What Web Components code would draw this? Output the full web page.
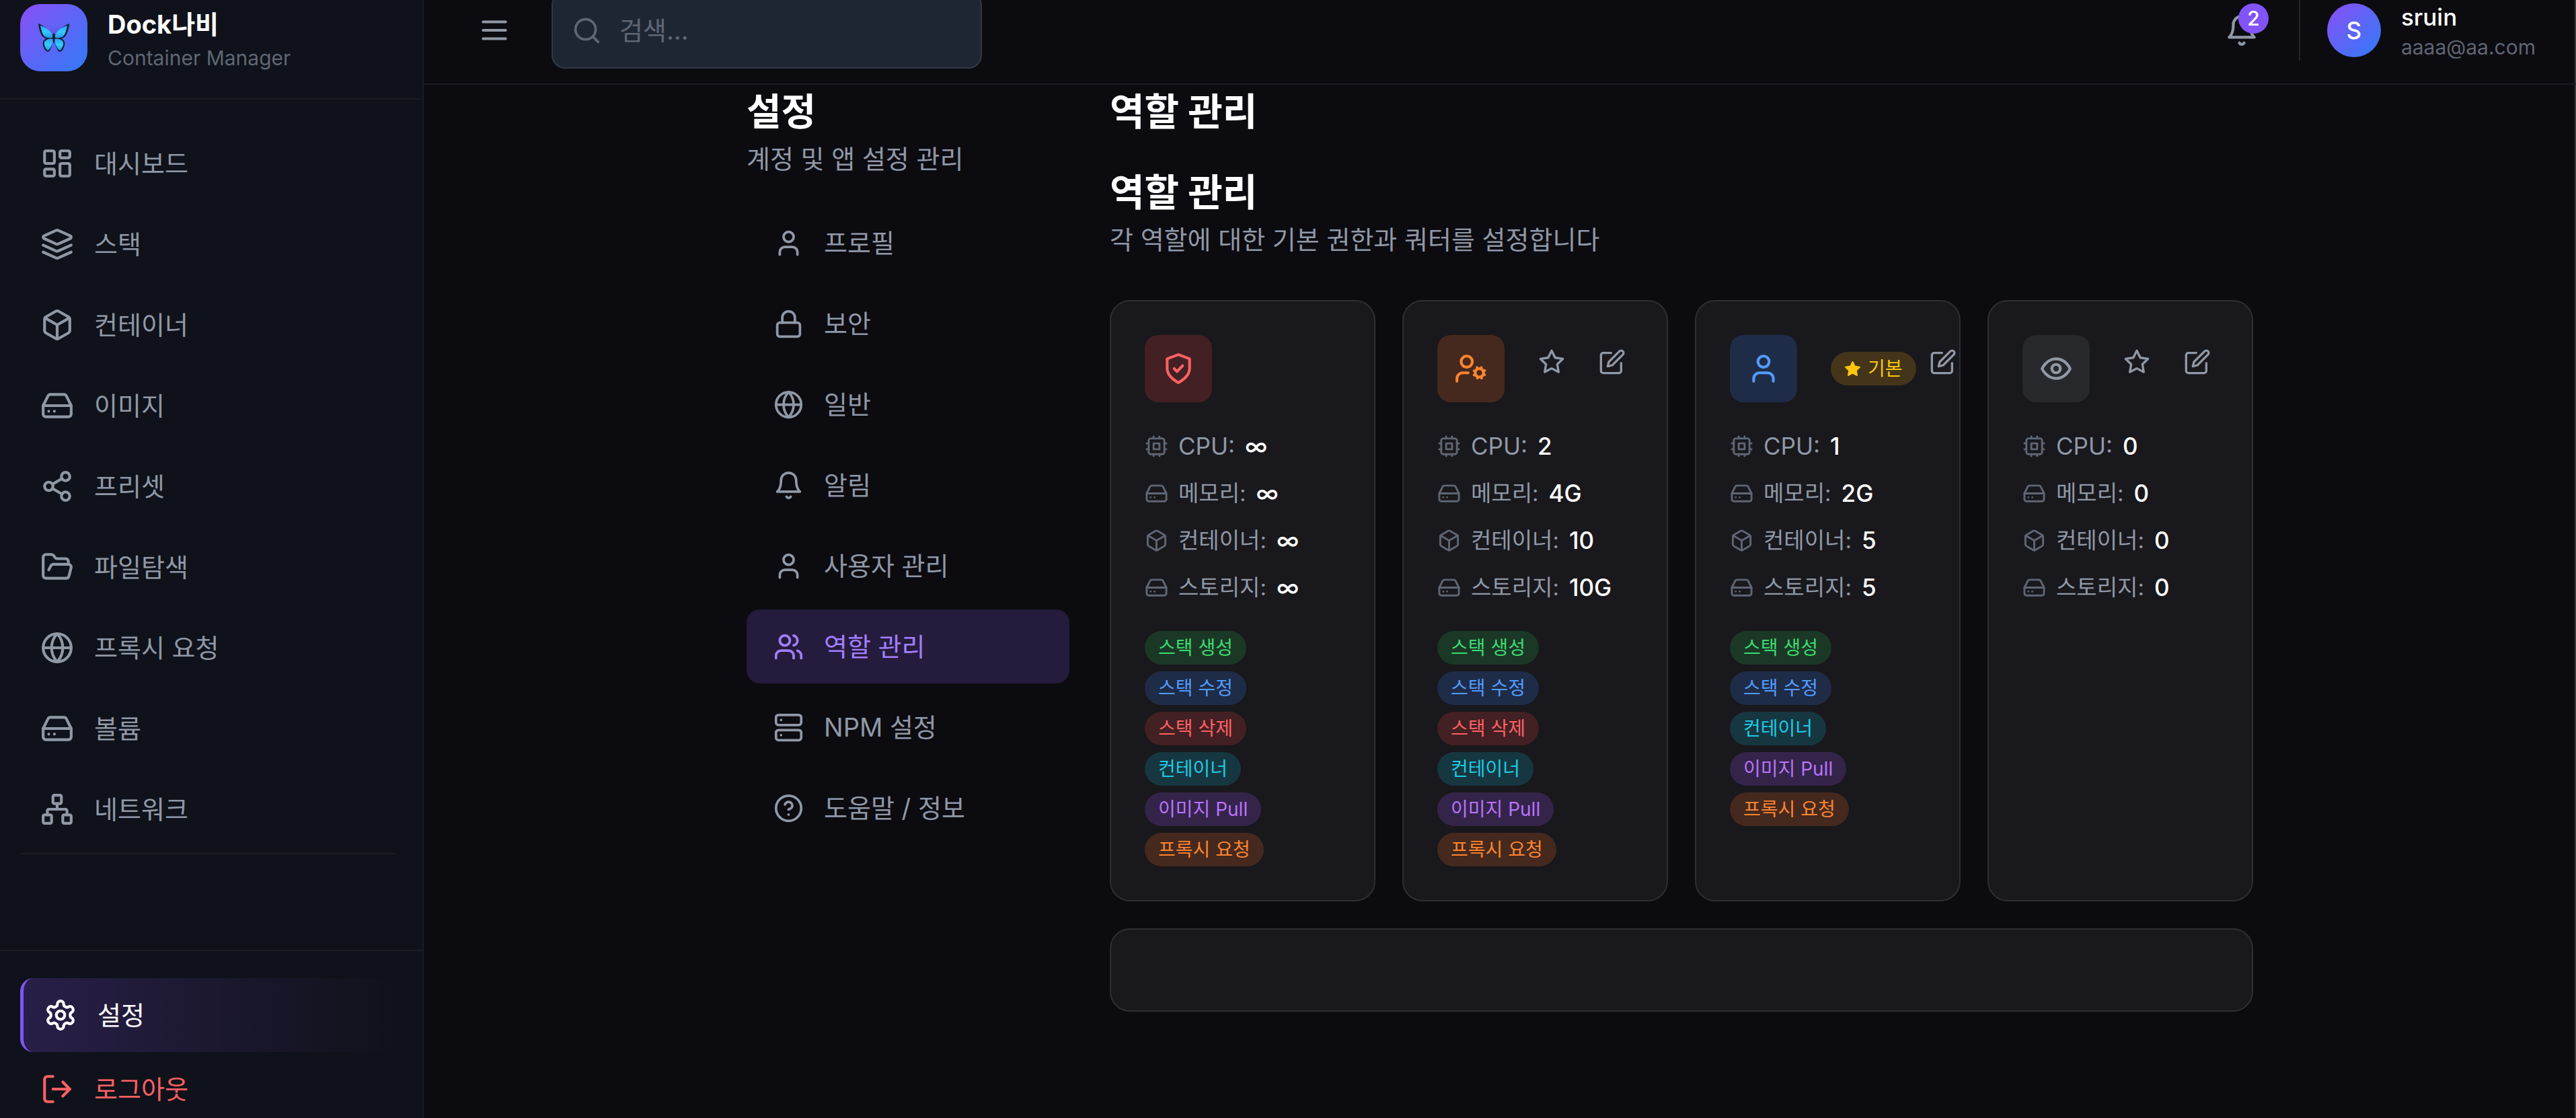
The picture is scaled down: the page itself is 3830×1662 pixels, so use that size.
<!DOCTYPE html>
<html lang="ko">
<head>
<meta charset="utf-8">
<meta name="viewport" content="width=device-width, initial-scale=1">
<title>Dock나비</title>
<style>
    :root {
        --text: #ffffff;
        --muted: #9098a6;
        --dim: #5f6673;
        --line: #1b1d23;
        --violet: #8254f7;
        --brand: linear-gradient(135deg, #8a4ff5, #2f7bf8);
        --card: #19181c;
        --card-line: #2f2f32;
    }
    html, body { height: 100%; }
    body {
        margin: 0;
        overflow: hidden;
        background: #0c0b10;
        color: var(--text);
        font: 38px/60px Inter, "Noto Sans CJK KR", sans-serif;
    }
</style>
</head>
<body>
<app-shell>
    <side-bar slot="side">
        <nav-item icon="dashboard" href="#dashboard">대시보드</nav-item>
        <nav-item icon="layers" href="#stacks">스택</nav-item>
        <nav-item icon="box" href="#containers">컨테이너</nav-item>
        <nav-item icon="drive" href="#images">이미지</nav-item>
        <nav-item icon="share" href="#presets">프리셋</nav-item>
        <nav-item icon="folder" href="#files">파일탐색</nav-item>
        <nav-item icon="globe" href="#proxy">프록시 요청</nav-item>
        <nav-item icon="drive" href="#volumes">볼륨</nav-item>
        <nav-item icon="network" href="#networks">네트워크</nav-item>
        <nav-item slot="footer" icon="settings" href="#settings" active>설정</nav-item>
        <nav-item slot="footer" icon="logout" href="#logout" danger>로그아웃</nav-item>
    </side-bar>
    <top-bar slot="top" count="2" name="sruin" email="aaaa@aa.com"></top-bar>
    <settings-layout>
        <h1 slot="title">설정</h1>
        <span slot="hint">계정 및 앱 설정 관리</span>
        <nav-item slot="menu" compact icon="user" href="#profile">프로필</nav-item>
        <nav-item slot="menu" compact icon="lock" href="#security">보안</nav-item>
        <nav-item slot="menu" compact icon="globe" href="#general">일반</nav-item>
        <nav-item slot="menu" compact icon="bell" href="#alerts">알림</nav-item>
        <nav-item slot="menu" compact icon="user" href="#users">사용자 관리</nav-item>
        <nav-item slot="menu" compact icon="users" href="#roles" active>역할 관리</nav-item>
        <nav-item slot="menu" compact icon="server" href="#npm">NPM 설정</nav-item>
        <nav-item slot="menu" compact icon="help" href="#about">도움말 / 정보</nav-item>
        <role-page></role-page>
    </settings-layout>
</app-shell>

<script>
const ICONS = {
    dashboard: '<rect x="3" y="3" width="7" height="9" rx="1"/><rect x="14" y="3" width="7" height="5" rx="1"/><rect x="14" y="12" width="7" height="9" rx="1"/><rect x="3" y="16" width="7" height="5" rx="1"/>',
    layers: '<path d="m12.83 2.18a2 2 0 0 0-1.66 0L2.6 6.08a1 1 0 0 0 0 1.83l8.58 3.91a2 2 0 0 0 1.66 0l8.58-3.9a1 1 0 0 0 0-1.83Z"/><path d="m22 17.65-9.17 4.16a2 2 0 0 1-1.66 0L2 17.65"/><path d="m22 12.65-9.17 4.16a2 2 0 0 1-1.66 0L2 12.65"/>',
    box: '<path d="M21 8a2 2 0 0 0-1-1.73l-7-4a2 2 0 0 0-2 0l-7 4A2 2 0 0 0 3 8v8a2 2 0 0 0 1 1.73l7 4a2 2 0 0 0 2 0l7-4A2 2 0 0 0 21 16Z"/><path d="m3.3 7 8.7 5 8.7-5"/><path d="M12 22V12"/>',
    drive: '<path d="M22 12H2"/><path d="M5.45 5.11 2 12v6a2 2 0 0 0 2 2h16a2 2 0 0 0 2-2v-6l-3.45-6.89A2 2 0 0 0 16.76 4H7.24a2 2 0 0 0-1.79 1.11z"/><path d="M6 16h.01M10 16h.01"/>',
    share: '<circle cx="18" cy="5" r="3"/><circle cx="6" cy="12" r="3"/><circle cx="18" cy="19" r="3"/><path d="m8.59 13.51 6.83 3.98M15.41 6.51l-6.82 3.98"/>',
    folder: '<path d="m6 14 1.5-2.9A2 2 0 0 1 9.24 10H20a2 2 0 0 1 1.94 2.5l-1.54 6a2 2 0 0 1-1.95 1.5H4a2 2 0 0 1-2-2V5a2 2 0 0 1 2-2h3.9a2 2 0 0 1 1.69.9l.81 1.2a2 2 0 0 0 1.67.9H18a2 2 0 0 1 2 2v2"/>',
    globe: '<circle cx="12" cy="12" r="10"/><path d="M12 2a14.5 14.5 0 0 0 0 20 14.5 14.5 0 0 0 0-20"/><path d="M2 12h20"/>',
    network: '<rect x="16" y="16" width="6" height="6" rx="1"/><rect x="2" y="16" width="6" height="6" rx="1"/><rect x="9" y="2" width="6" height="6" rx="1"/><path d="M5 16v-3a1 1 0 0 1 1-1h12a1 1 0 0 1 1 1v3"/><path d="M12 12V8"/>',
    settings: '<path d="M12.22 2h-.44a2 2 0 0 0-2 2v.18a2 2 0 0 1-1 1.73l-.43.25a2 2 0 0 1-2 0l-.15-.08a2 2 0 0 0-2.73.73l-.22.38a2 2 0 0 0 .73 2.73l.15.1a2 2 0 0 1 1 1.72v.51a2 2 0 0 1-1 1.74l-.15.09a2 2 0 0 0-.73 2.73l.22.38a2 2 0 0 0 2.73.73l.15-.08a2 2 0 0 1 2 0l.43.25a2 2 0 0 1 1 1.73V20a2 2 0 0 0 2 2h.44a2 2 0 0 0 2-2v-.18a2 2 0 0 1 1-1.73l.43-.25a2 2 0 0 1 2 0l.15.08a2 2 0 0 0 2.73-.73l.22-.39a2 2 0 0 0-.73-2.73l-.15-.08a2 2 0 0 1-1-1.74v-.5a2 2 0 0 1 1-1.74l.15-.09a2 2 0 0 0 .73-2.73l-.22-.38a2 2 0 0 0-2.73-.73l-.15.08a2 2 0 0 1-2 0l-.43-.25a2 2 0 0 1-1-1.73V4a2 2 0 0 0-2-2z"/><circle cx="12" cy="12" r="3"/>',
    logout: '<path d="M9 21H5a2 2 0 0 1-2-2V5a2 2 0 0 1 2-2h4"/><path d="m16 17 5-5-5-5"/><path d="M21 12H9"/>',
    menu: '<path d="M4 6h16M4 12h16M4 18h16"/>',
    search: '<circle cx="11" cy="11" r="8"/><path d="m21 21-4.3-4.3"/>',
    bell: '<path d="M6 8a6 6 0 0 1 12 0c0 7 3 9 3 9H3s3-2 3-9"/><path d="M10.3 21a1.94 1.94 0 0 0 3.4 0"/>',
    user: '<path d="M19 21v-2a4 4 0 0 0-4-4H9a4 4 0 0 0-4 4v2"/><circle cx="12" cy="7" r="4"/>',
    users: '<path d="M16 21v-2a4 4 0 0 0-4-4H6a4 4 0 0 0-4 4v2"/><circle cx="9" cy="7" r="4"/><path d="M22 21v-2a4 4 0 0 0-3-3.87"/><path d="M16 3.13a4 4 0 0 1 0 7.75"/>',
    lock: '<rect x="3" y="11" width="18" height="11" rx="2"/><path d="M7 11V7a5 5 0 0 1 10 0v4"/>',
    server: '<rect x="2" y="2" width="20" height="8" rx="2"/><rect x="2" y="14" width="20" height="8" rx="2"/><path d="M6 6h.01M6 18h.01"/>',
    help: '<circle cx="12" cy="12" r="10"/><path d="M9.09 9a3 3 0 0 1 5.83 1c0 2-3 3-3 3"/><path d="M12 17h.01"/>',
    shield: '<path d="M12 22s8-4 8-10V5l-8-3-8 3v7c0 6 8 10 8 10"/><path d="m9 12 2 2 4-4"/>',
    usercog: '<circle cx="18" cy="15" r="3"/><circle cx="9" cy="7" r="4"/><path d="M10 15H6a4 4 0 0 0-4 4v2"/><path d="m21.7 16.4-.9-.3M15.2 13.9l-.9-.3M16.6 18.7l.3-.9M19.1 12.2l.3-.9M19.6 18.7l-.4-1M16.8 12.3l-.4-1M14.3 16.6l1-.4M20.7 13.8l1-.4"/>',
    eye: '<path d="M2 12s3-7 10-7 10 7 10 7-3 7-10 7-10-7-10-7Z"/><circle cx="12" cy="12" r="3"/>',
    star: '<path d="m12 2 3.09 6.26L22 9.27l-5 4.87 1.18 6.88L12 17.77l-6.18 3.25L7 14.14 2 9.27l6.91-1.01Z"/>',
    edit: '<path d="M11 4H4a2 2 0 0 0-2 2v14a2 2 0 0 0 2 2h14a2 2 0 0 0 2-2v-7"/><path d="M18.5 2.5a2.121 2.121 0 0 1 3 3L12 15l-4 1 1-4Z"/>',
    cpu: '<rect x="4" y="4" width="16" height="16" rx="2"/><rect x="9" y="9" width="6" height="6"/><path d="M15 2v2M15 20v2M2 15h2M2 9h2M20 15h2M20 9h2M9 2v2M9 20v2"/>'
};

const ROLES = [
    { icon: "shield", tone: "red", actions: [], quota: ["∞", "∞", "∞", "∞"], perms: ["create", "update", "delete", "container", "pull", "proxy"] },
    { icon: "usercog", tone: "orange", actions: ["star", "edit"], quota: ["2", "4G", "10", "10G"], perms: ["create", "update", "delete", "container", "pull", "proxy"] },
    { icon: "user", tone: "blue", actions: ["default", "edit"], quota: ["1", "2G", "5", "5"], perms: ["create", "update", "container", "pull", "proxy"] },
    { icon: "eye", tone: "gray", actions: ["star", "edit"], quota: ["0", "0", "0", "0"], perms: [] }
];

const QUOTAS = [
    { icon: "cpu", label: "CPU:", lang: "en" },
    { icon: "drive", label: "메모리:", lang: "ko" },
    { icon: "box", label: "컨테이너:", lang: "ko" },
    { icon: "drive", label: "스토리지:", lang: "ko" }
];

const PERMS = {
    create: ["green", "스택 생성"],
    update: ["blue", "스택 수정"],
    delete: ["red", "스택 삭제"],
    container: ["cyan", "컨테이너"],
    pull: ["purple", "이미지 Pull"],
    proxy: ["orange", "프록시 요청"]
};

// background / foreground pairs, shared by the icon tiles and the badges
const TONES = `
    .red { background: #432023; color: #fb6163; }
    .orange { background: #45291e; color: #fb8430; }
    .blue { background: #1f2c48; color: #529bfd; }
    .gray { background: #26282c; color: #9299a6; }
    .green { background: #1b3827; color: #3cdb70; }
    .cyan { background: #173740; color: #1ccbe6; }
    .purple { background: #35244a; color: #b873fb; }
    .yellow { background: #44351a; color: #fcc60f; }
`;

class BaseElement extends HTMLElement {
    constructor() {
        super();
        this.attachShadow({ mode: "open" });
    }
    connectedCallback() {
        const t = document.createElement("template");
        t.innerHTML = this.render();
        this.shadowRoot.replaceChildren(t.content.cloneNode(true));
    }
}

customElements.define("app-icon", class extends BaseElement {
    render() {
        return `
            <style>
            :host { display: block; flex: none; inline-size: var(--icon, 50px); block-size: var(--icon, 50px); }
            svg { display: block; inline-size: 100%; block-size: 100%; fill: none; stroke: currentColor; stroke-width: 2; stroke-linecap: round; stroke-linejoin: round; }
            :host([filled]) svg { fill: currentColor; }
            </style>
            <svg viewBox="0 0 24 24" aria-hidden="true">${ICONS[this.getAttribute("name")] || ""}</svg>
        `;
    }
});

customElements.define("app-shell", class extends BaseElement {
    render() {
        return `
            <style>
            :host { display: flex; block-size: 100vh; }
            .main { flex: 1; min-inline-size: 0; display: flex; flex-direction: column; box-shadow: inset -2px 0 #39393c; }
            </style>
            <slot name="side"></slot>
            <div class="main">
                <slot name="top"></slot>
                <slot></slot>
            </div>
        `;
    }
});

customElements.define("nav-item", class extends BaseElement {
    render() {
        return `
            <style>
            :host { display: block; }
            a {
                display: flex;
                align-items: center;
                gap: 30px;
                padding: 25px 30px;
                border-radius: 20px;
                color: var(--muted);
                text-decoration: none;
                white-space: nowrap;
            }
            :host([active]) a {
                color: var(--text);
                border-left: 5px solid var(--violet);
                background: linear-gradient(90deg, #281f49, #1d1932 45%, #0f121a00);
            }
            :host([danger]) a { color: #fb6163; }
            :host([compact]) a { padding-inline: 40px; --icon: 45px; }
            :host([compact][active]) a { border: 0; background: #251b3c; color: #a17fff; }
            </style>
            <a href="${this.getAttribute("href")}"${this.hasAttribute("active") ? ' aria-current="page"' : ""}>
                <app-icon name="${this.getAttribute("icon")}"></app-icon>
                <slot></slot>
            </a>
        `;
    }
});

customElements.define("side-bar", class extends BaseElement {
    render() {
        return `
            <style>
            :host {
                display: flex;
                flex-direction: column;
                flex: none;
                box-sizing: border-box;
                inline-size: 630px;
                overflow: hidden;
                background: #0f121a;
                border-right: 2px solid var(--line);
            }
            header, nav, footer { flex: none; padding: 40px 40px 40px 30px; }
            header { display: flex; gap: 30px; padding-top: 6px; border-bottom: 2px solid var(--line); }
            .logo {
                display: grid;
                place-items: center;
                inline-size: 100px;
                block-size: 100px;
                border-radius: 30px;
                background: var(--brand);
            }
            .logo svg { inline-size: 46px; block-size: 46px; }
            strong { display: block; }
            small { display: block; font-size: 30px; line-height: 40px; color: var(--dim); }
            nav { display: flex; flex-direction: column; gap: 10px; }
            hr { inline-size: 100%; margin: 0 0 102px; border: 0; border-top: 2px solid var(--line); }
            footer { border-top: 2px solid var(--line); }
            </style>
            <header>
                <div class="logo">
                    <svg viewBox="0 0 46 46" aria-hidden="true">
                        <defs>
                            <linearGradient id="wing" x1="0" y1="0" x2="0" y2="1">
                                <stop offset="0" stop-color="#2f9ff8"/>
                                <stop offset=".5" stop-color="#33ccff"/>
                                <stop offset="1" stop-color="#2395ee"/>
                            </linearGradient>
                        </defs>
                        <g fill="#10202f">
                            <path d="M22 24C19 14 9 5 0 2c1 9 3 15 6 19 2 2 4 3 6 3-4 2-6 5-5 10 1 5 4 10 8 10 4-3 6-11 7-20Z"/>
                            <path d="M24 24C27 14 37 5 46 2c-1 9-3 15-6 19-2 2-4 3-6 3 4 2 6 5 5 10-1 5-4 10-8 10-4-3-6-11-7-20Z"/>
                        </g>
                        <g fill="url(#wing)">
                            <path d="M22 22C19 14 12 7 3 5c1 6 3 12 5 15 3 3 8 4 14 3Z"/>
                            <path d="M24 22C27 14 34 7 43 5c-1 6-3 12-5 15-3 3-8 4-14 3Z"/>
                            <path d="M22 25c-6-1-12 1-13 5-1 4 2 10 5 12 4-2 7-9 8-17Z"/>
                            <path d="M24 25c6-1 12 1 13 5 1 4-2 10-5 12-4-2-7-9-8-17Z"/>
                        </g>
                        <path d="M22 17 19 8M24 17l3-9" fill="none" stroke="#5a55c8" stroke-width="1"/>
                        <path d="M23 16c2 1 2 4 2 6s-1 8-2 10c-1-2-2-8-2-10s0-5 2-6Z" fill="#1b1a2b"/>
                    </svg>
                </div>
                <div>
                    <strong>Dock나비</strong>
                    <small>Container Manager</small>
                </div>
            </header>
            <nav aria-label="주 메뉴">
                <slot></slot>
                <hr>
            </nav>
            <footer><slot name="footer"></slot></footer>
        `;
    }
});

customElements.define("top-bar", class extends BaseElement {
    render() {
        const name = this.getAttribute("name");
        return `
            <style>
            :host { display: block; flex: none; padding: 0 60px 34px 60px; border-bottom: 2px solid var(--line); }
            .row { display: flex; align-items: center; gap: 40px; block-size: 90px; }
            button { all: unset; box-sizing: border-box; position: relative; padding: 20px; color: var(--muted); cursor: pointer; }
            label {
                box-sizing: border-box;
                display: flex;
                align-items: center;
                gap: 26px;
                inline-size: 640px;
                block-size: 114px;
                padding: 0 28px;
                border: 2px solid #323946;
                border-radius: 20px;
                background: #1e2633;
                color: var(--dim);
                --icon: 45px;
            }
            input { all: unset; flex: 1; min-inline-size: 0; color: var(--text); }
            input::placeholder { color: var(--dim); opacity: 1; }
            .space { flex: 1; }
            /* unread counter over the bell */
            .count {
                position: absolute;
                inset: 5px 5px auto auto;
                inline-size: 45px;
                border-radius: 50%;
                background: var(--violet);
                color: var(--text);
                font-size: 30px;
                font-weight: 500;
                line-height: 45px;
                text-align: center;
            }
            .rule { align-self: stretch; inline-size: 2px; background: #26262a; }
            .user { display: flex; align-items: center; gap: 30px; }
            .avatar {
                inline-size: 80px;
                border-radius: 50%;
                background: var(--brand);
                font-size: 35px;
                font-weight: 500;
                line-height: 80px;
                text-align: center;
            }
            .name { font-size: 35px; font-weight: 500; line-height: 50px; }
            .mail { font-size: 30px; line-height: 40px; color: var(--dim); }
            </style>
            <div class="row">
                <button type="button" aria-label="메뉴"><app-icon name="menu"></app-icon></button>
                <label>
                    <app-icon name="search"></app-icon>
                    <input type="search" placeholder="검색..." aria-label="검색">
                </label>
                <div class="space"></div>
                <button type="button" aria-label="알림">
                    <app-icon name="bell"></app-icon>
                    <span class="count">${this.getAttribute("count")}</span>
                </button>
                <div class="rule"></div>
                <div class="user">
                    <div class="avatar">${name[0].toUpperCase()}</div>
                    <div>
                        <div class="name">${name}</div>
                        <div class="mail">${this.getAttribute("email")}</div>
                    </div>
                </div>
            </div>
        `;
    }
});

customElements.define("settings-layout", class extends BaseElement {
    render() {
        return `
            <style>
            :host { display: flex; gap: 60px; inline-size: 100%; max-inline-size: 2240px; margin-inline: auto; }
            aside { flex: none; inline-size: 480px; }
            ::slotted(h1) { margin: 0; font-size: 56px; font-weight: 700; line-height: 80px; }
            .hint { color: var(--muted); }
            nav { display: flex; flex-direction: column; gap: 10px; margin-top: 40px; }
            main { flex: 1; min-inline-size: 0; }
            </style>
            <aside>
                <slot name="title"></slot>
                <div class="hint"><slot name="hint"></slot></div>
                <nav aria-label="설정 메뉴"><slot name="menu"></slot></nav>
            </aside>
            <main><slot></slot></main>
        `;
    }
});

customElements.define("role-card", class extends BaseElement {
    render() {
        const role = ROLES[Number(this.getAttribute("index"))];
        const actions = role.actions.map(a => {
            if (a === "default") return `<span class="default yellow"><app-icon name="star" filled></app-icon>기본</span>`;
            const label = a === "star" ? "기본 역할로 지정" : "편집";
            return `<button type="button" aria-label="${label}"><app-icon name="${a}"></app-icon></button>`;
        }).join("");
        const stats = QUOTAS.map((q, i) => `
            <li><app-icon name="${q.icon}"></app-icon><span lang="${q.lang}">${q.label}</span><b>${role.quota[i]}</b></li>
        `).join("");
        const perms = role.perms.map(p => `<li class="${PERMS[p][0]}">${PERMS[p][1]}</li>`).join("");
        return `
            <style>
            ${TONES}
            :host {
                display: block;
                padding: 50px;
                border: 2px solid var(--card-line);
                border-radius: 30px;
                background: var(--card);
            }
            .head { display: flex; gap: 30px; }
            .tile { flex: none; display: grid; place-items: center; inline-size: 100px; block-size: 100px; border-radius: 20px; }
            .actions { flex: none; display: flex; align-items: flex-start; gap: 10px; }
            .actions.marked { gap: 0; padding-left: 20px; }
            button { all: unset; padding: 20px; color: var(--muted); cursor: pointer; --icon: 40px; }
            .default {
                align-self: center;
                display: flex;
                align-items: center;
                gap: 10px;
                padding: 5px 20px;
                border-radius: 25px;
                font-size: 28px;
                line-height: 40px;
                --icon: 25px;
            }
            ul { display: flex; flex-direction: column; margin: 40px 0 0; padding: 0; list-style: none; }
            .stats { gap: 20px; }
            .stats li { display: flex; align-items: center; gap: 15px; font-size: 35px; line-height: 50px; color: var(--muted); white-space: nowrap; }
            .stats app-icon { --icon: 35px; color: var(--dim); }
            .stats b { font-weight: 500; color: var(--text); }
            .stats span:lang(ko) { font-size: 33px; }
            .perms { align-items: flex-start; gap: 10px; }
            .perms li { padding: 5px 20px; border-radius: 25px; font-size: 28px; line-height: 40px; }
            </style>
            <div class="head">
                <div class="tile ${role.tone}"><app-icon name="${role.icon}"></app-icon></div>
                <div class="actions${role.actions.includes("default") ? " marked" : ""}">${actions}</div>
            </div>
            <ul class="stats">${stats}</ul>
            <ul class="perms">${perms}</ul>
        `;
    }
});

customElements.define("role-page", class extends BaseElement {
    render() {
        return `
            <style>
            :host { display: block; }
            h2 { margin: 0 0 40px; font-size: 56px; font-weight: 700; line-height: 80px; }
            h2.sub { margin: 0; }
            p { margin: 0; color: var(--muted); }
            .grid { display: grid; grid-template-columns: repeat(4, minmax(0, 1fr)); gap: 40px; margin: 60px 0 40px; }
            .panel { padding: 60px; border: 2px solid var(--card-line); border-radius: 30px; background: var(--card); }
            </style>
            <h2>역할 관리</h2>
            <h2 class="sub">역할 관리</h2>
            <p>각 역할에 대한 기본 권한과 쿼터를 설정합니다</p>
            <div class="grid">${ROLES.map((r, i) => `<role-card index="${i}"></role-card>`).join("")}</div>
            <div class="panel"></div>
        `;
    }
});
</script>
</body>
</html>
